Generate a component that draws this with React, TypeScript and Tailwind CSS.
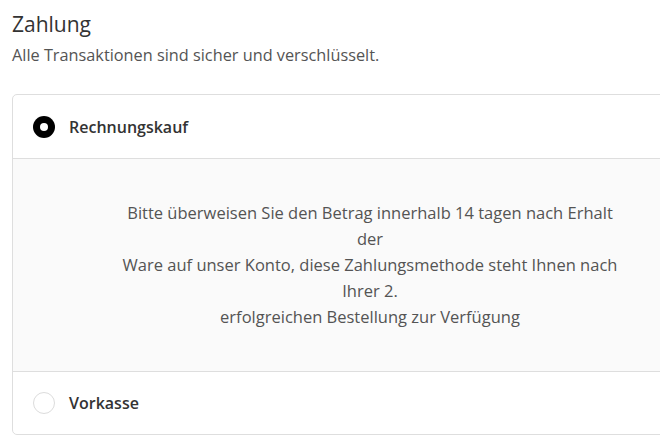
export default function App() {
  return (
    <div className="w-[660px] h-[435px] overflow-hidden bg-white pl-3 font-['Open_Sans',sans-serif]">
      <h2 className="pt-[9px] text-[21px] leading-[30px] text-[#333]">Zahlung</h2>
      <p className="mt-[5px] text-[16.3px] leading-[22px] text-[#545454]">
        Alle Transaktionen sind sicher und verschlüsselt.
      </p>
      <div className="mt-[28px] w-[716px] rounded-[5px] border border-[#dedede]">
        <label className="flex h-[63px] items-center gap-[14px] px-[20px]">
          <span className="flex h-[22px] w-[22px] items-center justify-center rounded-full bg-black">
            <span className="h-[8px] w-[8px] rounded-full bg-white"></span>
          </span>
          <span className="text-[16px] font-semibold text-[#333]">Rechnungskauf</span>
        </label>
        <div className="flex h-[213px] items-center justify-center border-t border-[#dedede] bg-[#fafafa]">
          <p className="w-[504px] text-center text-[16.5px] leading-[26px] text-[#545454]">
            Bitte überweisen Sie den Betrag innerhalb 14 tagen nach Erhalt der
            <br />
            Ware auf unser Konto, diese Zahlungsmethode steht Ihnen nach Ihrer 2.
            <br />
            erfolgreichen Bestellung zur Verfügung
          </p>
        </div>
        <label className="flex h-[63px] items-center gap-[14px] border-t border-[#dedede] px-[20px]">
          <span className="h-[22px] w-[22px] rounded-full border border-[#dcdcdc] bg-white"></span>
          <span className="text-[16px] font-semibold text-[#333]">Vorkasse</span>
        </label>
      </div>
    </div>
  );
}
